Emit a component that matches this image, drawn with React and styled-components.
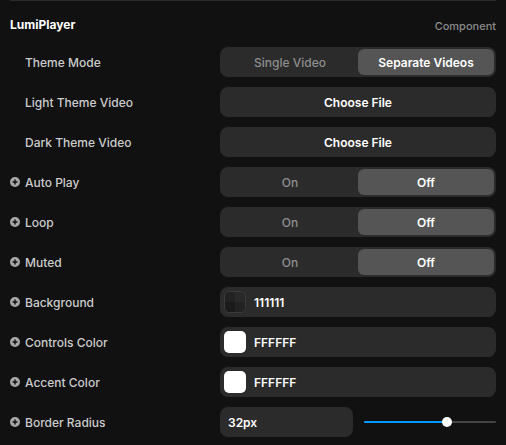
import React from "react";
import styled, { createGlobalStyle } from "styled-components";

const Global = createGlobalStyle`
  html, body { margin: 0; padding: 0; background: #111111; }
  body { font-family: Inter, "Noto Sans", sans-serif; -webkit-font-smoothing: antialiased; }
`;

const Panel = styled.div`
  padding: 0 10px;
  width: 486px;
  background: #111111;
`;

const Divider = styled.div`
  height: 1px;
  background: #2b2b2b;
`;

const Header = styled.div`
  height: 46px;
  display: flex;
  align-items: center;
  justify-content: space-between;
`;

const Title = styled.span`
  font-size: 12px;
  font-weight: 700;
  color: #ffffff;
`;

const Tag = styled.span`
  font-size: 11px;
  font-weight: 500;
  color: #8a8a8a;
  margin-top: 3px;
`;

const Rows = styled.div`
  display: flex;
  flex-direction: column;
  gap: 10px;
`;

const Row = styled.div`
  display: grid;
  grid-template-columns: 210px 1fr;
  align-items: center;
  height: 30px;
`;

const Label = styled.div`
  display: flex;
  align-items: center;
  gap: 5px;
  padding-left: ${(p) => (p.$indent ? "15px" : "0")};
  font-size: 12px;
  font-weight: 500;
  color: #cccccc;
`;

const PlusIcon = () => (
  <svg width="10" height="10" viewBox="0 0 10 10">
    <circle cx="5" cy="5" r="5" fill="#a8a8a8" />
    <path d="M5 2.5v5M2.5 5h5" stroke="#111" strokeWidth="1.5" />
  </svg>
);

const Segmented = styled.div`
  display: grid;
  grid-template-columns: 1fr 1fr;
  height: 30px;
  padding: 2px;
  box-sizing: border-box;
  background: #2b2b2b;
  border-radius: 8px;
`;

const Segment = styled.div`
  display: flex;
  align-items: center;
  justify-content: center;
  border-radius: 6px;
  font-size: 12px;
  font-weight: ${(p) => (p.$active ? 600 : 500)};
  color: ${(p) => (p.$active ? "#ffffff" : "#8e8e8e")};
  background: ${(p) => (p.$active ? "#555555" : "transparent")};
`;

const Button = styled.div`
  height: 30px;
  display: flex;
  align-items: center;
  justify-content: center;
  background: #2b2b2b;
  border-radius: 8px;
  font-size: 12px;
  font-weight: 600;
  color: #ffffff;
`;

const ColorField = styled.div`
  height: 30px;
  display: flex;
  align-items: center;
  gap: 8px;
  padding: 0 4px;
  background: #2b2b2b;
  border-radius: 8px;
  font-size: 12px;
  font-weight: 600;
  color: #ffffff;
`;

const Swatch = styled.div`
  width: 22px;
  height: 22px;
  box-sizing: border-box;
  border-radius: 5px;
  background: ${(p) => p.$color};
  border: ${(p) => (p.$dark ? "1px solid #3a3a3a" : "none")};
  ${(p) =>
    p.$dark
      ? `background-image: linear-gradient(90deg, transparent 50%, rgba(255,255,255,0.03) 50%), linear-gradient(0deg, transparent 50%, rgba(255,255,255,0.03) 50%);`
      : ""}
`;

const SliderRow = styled.div`
  display: grid;
  grid-template-columns: 133px 1fr;
  align-items: center;
  gap: 11px;
`;

const NumberInput = styled.div`
  height: 30px;
  display: flex;
  align-items: center;
  padding-left: 8px;
  background: #2b2b2b;
  border-radius: 8px;
  font-size: 12px;
  font-weight: 600;
  color: #ffffff;
`;

const Track = styled.div`
  position: relative;
  height: 2px;
  background: #444444;
  border-radius: 1px;
`;

const Fill = styled.div`
  height: 100%;
  background: #0099ff;
  border-radius: 1px;
`;

const Knob = styled.div`
  position: absolute;
  top: 50%;
  width: 10px;
  height: 10px;
  margin: -5px 0 0 -5px;
  border-radius: 50%;
  background: #ffffff;
`;

const Slider = ({ value }) => (
  <Track>
    <Fill style={{ width: `${value}%` }} />
    <Knob style={{ left: `${value}%` }} />
  </Track>
);

const Toggle = ({ options, active }) => (
  <Segmented>
    {options.map((o) => (
      <Segment key={o} $active={o === active}>
        {o}
      </Segment>
    ))}
  </Segmented>
);

const Prop = ({ label, plus, children }) => (
  <Row>
    <Label $indent={!plus}>
      {plus && <PlusIcon />}
      {label}
    </Label>
    {children}
  </Row>
);

export default function App() {
  return (
    <>
      <Global />
      <Panel>
        <Divider />
        <Header>
          <Title>LumiPlayer</Title>
          <Tag>Component</Tag>
        </Header>
        <Rows>
          <Prop label="Theme Mode">
            <Toggle options={["Single Video", "Separate Videos"]} active="Separate Videos" />
          </Prop>
          <Prop label="Light Theme Video">
            <Button>Choose File</Button>
          </Prop>
          <Prop label="Dark Theme Video">
            <Button>Choose File</Button>
          </Prop>
          <Prop label="Auto Play" plus>
            <Toggle options={["On", "Off"]} active="Off" />
          </Prop>
          <Prop label="Loop" plus>
            <Toggle options={["On", "Off"]} active="Off" />
          </Prop>
          <Prop label="Muted" plus>
            <Toggle options={["On", "Off"]} active="Off" />
          </Prop>
          <Prop label="Background" plus>
            <ColorField>
              <Swatch $color="#1b1b1b" $dark />
              111111
            </ColorField>
          </Prop>
          <Prop label="Controls Color" plus>
            <ColorField>
              <Swatch $color="#ffffff" />
              FFFFFF
            </ColorField>
          </Prop>
          <Prop label="Accent Color" plus>
            <ColorField>
              <Swatch $color="#ffffff" />
              FFFFFF
            </ColorField>
          </Prop>
          <Prop label="Border Radius" plus>
            <SliderRow>
              <NumberInput>32px</NumberInput>
              <Slider value={63} />
            </SliderRow>
          </Prop>
        </Rows>
      </Panel>
    </>
  );
}
